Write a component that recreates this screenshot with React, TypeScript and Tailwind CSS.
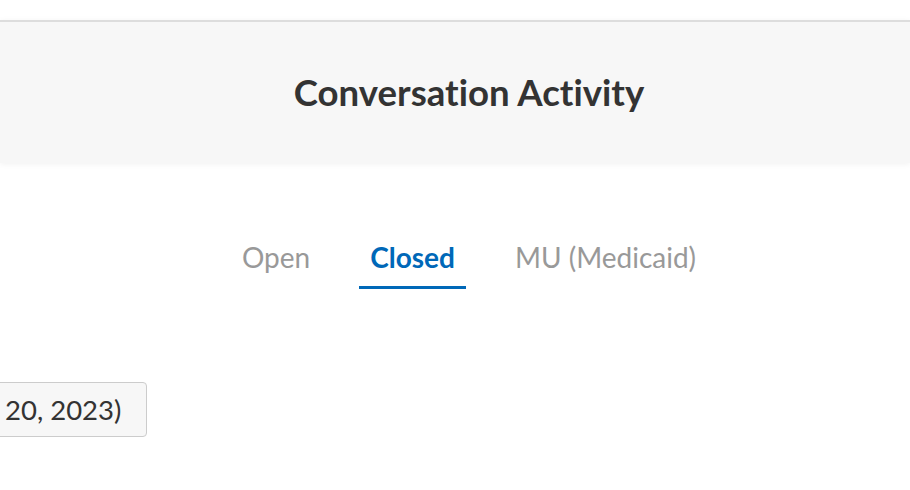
import React from "react";

export default function App() {
  return (
    <div
      className="w-full h-[490px] bg-white overflow-hidden pt-[20px] [font-variant-ligatures:none]"
      style={{ fontFamily: "Lato, 'Open Sans', sans-serif" }}
    >
      <div className="h-[143px] border-t-2 border-[#dddddd] bg-[#f7f7f7] shadow-[0_1px_6px_rgba(0,0,0,0.06)] flex items-center justify-center pl-[28px]">
        <h1 className="text-[36.6px] font-bold text-[#333333] leading-none">Conversation Activity</h1>
      </div>
      <div className="mt-[76px] flex justify-center pl-[28px] gap-[38px]">
        <div className="px-[11px] pb-[11px] border-b-[3px] border-transparent text-[28px] leading-[36px] text-[#999999]">Open</div>
        <div className="px-[11px] pb-[11px] border-b-[3px] border-[#0068b8] text-[28px] leading-[36px] text-[#0068b8] font-bold">Closed</div>
        <div className="px-[11px] pb-[11px] border-b-[3px] border-transparent text-[28px] leading-[36px] text-[#999999]">MU (Medicaid)</div>
      </div>
      <div className="mt-[93px] flex">
        <button className="-ml-[20px] h-[55px] pl-[24px] pr-[25px] bg-[#f7f7f7] border border-[#cccccc] rounded-[4px] text-[27.5px] text-[#333333] whitespace-nowrap">
          20, 2023)
        </button>
      </div>
    </div>
  );
}
